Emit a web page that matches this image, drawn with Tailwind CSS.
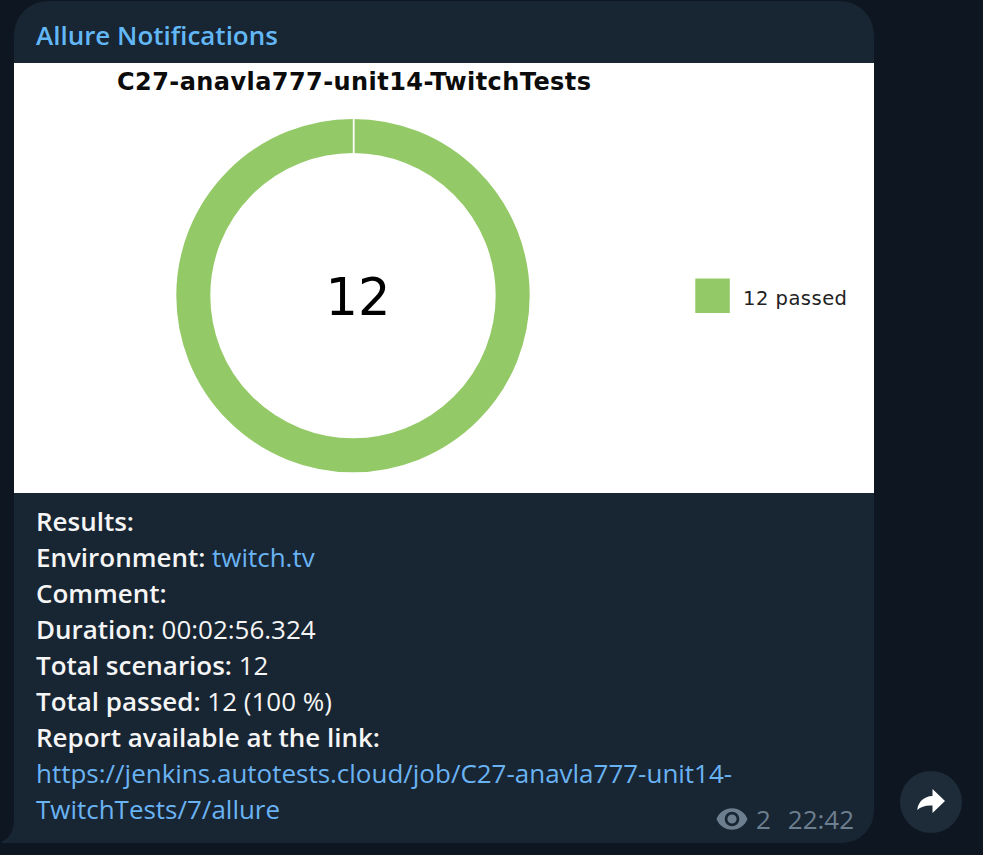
<!DOCTYPE html>
<html lang="en">
<head>
<meta charset="utf-8">
<title>Allure Notifications</title>
<script src="https://cdn.jsdelivr.net/npm/@tailwindcss/browser@4"></script>
</head>
<body class="h-[855px] overflow-hidden bg-[#0e1621] font-['Open_Sans','Noto_Sans',sans-serif] text-[25.970px] leading-9 text-[#f5f5f5]">
<main class="flex items-end pt-px pl-[14px]">
  <article class="relative flex h-[842px] w-[860px] flex-col rounded-t-[34px] rounded-br-[32px] bg-[#182533]">
    <svg class="absolute bottom-0 -left-3 h-[24px] w-3" viewBox="0 0 12 24" fill="#182533"><path d="M12 0V24H0V22.500C7.500 19 12 12 12 0Z"/></svg>
    <header class="h-[62px] pt-4 pl-[22px] font-semibold text-[#62b8f6]">Allure Notifications</header>
    <svg class="block h-[430px] w-[860px] shrink-0 bg-white font-['DejaVu_Sans',sans-serif]" viewBox="14 63 860 430">
      <text x="117" y="90" font-size="24" font-weight="700" fill="#0c0c0c" textLength="474">C27-anavla777-unit14-TwitchTests</text>
      <circle cx="353" cy="295.600" r="159.700" fill="none" stroke="#93c966" stroke-width="34"/>
      <path d="M353.700 118V154" stroke="#fff" stroke-width="1.800"/>
      <text x="325.500" y="315" font-size="51" fill="#000" textLength="65">12</text>
      <rect x="695.300" y="278.500" width="34.500" height="34.500" fill="#93c966"/>
      <text x="743" y="305" font-size="19.500" fill="#222" textLength="104">12 passed</text>
    </svg>
    <div class="px-[22px] pt-[10px]">
      <p><b class="font-semibold">Results:</b></p>
      <p><b class="font-semibold">Environment:</b> <a class="text-[#6ab3f3]">twitch.tv</a></p>
      <p><b class="font-semibold">Comment:</b></p>
      <p><b class="font-semibold">Duration:</b> 00:02:56.324</p>
      <p><b class="font-semibold">Total scenarios:</b> 12</p>
      <p><b class="font-semibold">Total passed:</b> 12 (100 %)</p>
      <p><b class="font-semibold">Report available at the link:</b></p>
      <p><a class="text-[#6ab3f3]">https://jenkins.autotests.cloud/job/C27-anavla777-unit14-<br>TwitchTests/7/allure</a></p>
    </div>
    <footer class="absolute right-5 bottom-[6px] flex items-center text-[#6d7f8f]">
      <svg class="mr-2 mb-px h-[22px] w-8" viewBox="0 0 32 22"><path fill="#6d7f8f" fill-rule="evenodd" d="M.5 11C3 4.500 9 .2 16 .2S29 4.500 31.500 11C29 17.500 23 21.800 16 21.800S3 17.500.5 11ZM16 3.700a7.300 7.300 0 1 0 0 14.600a7.300 7.300 0 0 0 0-14.600ZM16 6.400a4.600 4.600 0 1 1 0 9.200a4.600 4.600 0 0 1 0-9.200Z"/></svg>
      <span class="mr-[17px]">2</span><span>22:42</span>
    </footer>
  </article>
  <button class="mb-[10px] ml-[26px] flex size-[62px] items-center justify-center rounded-full bg-[#1e2c3a] pr-px pb-[2px]" aria-label="Share">
    <svg class="h-6 w-7" viewBox="0 0 28 24" fill="#fff"><path d="M15.500 0L28 12L15.500 24V16.500C9 16 4 17.500.3 21C1 13 7 7.200 15.500 7Z"/></svg>
  </button>
</main>
</body>
</html>
